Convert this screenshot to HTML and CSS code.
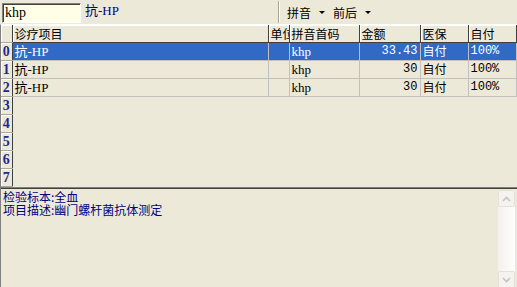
FILE: index.html
```html
<!DOCTYPE html>
<html lang="zh-CN">
<head>
    <meta charset="UTF-8">
    <title>诊疗项目</title>
    <link rel="stylesheet" href="styles.css">
</head>
<body>

<div class="toolbar">
    <input class="search" type="text" value="khp">
    <span class="picked">抗-HP</span>
    <div class="options">
        <span class="opt">拼音 <i class="caret"></i></span>
        <span class="opt">前后 <i class="caret"></i></span>
    </div>
</div>

<div class="grid">
    <table>
        <colgroup>
            <col class="c-ind">
            <col class="c-name">
            <col class="c-unit">
            <col class="c-code">
            <col class="c-price">
            <col class="c-ins">
            <col class="c-self">
        </colgroup>
        <thead>
        <tr>
            <th class="ind"></th>
            <th>诊疗项目</th>
            <th>单位</th>
            <th>拼音首码</th>
            <th>金额</th>
            <th>医保</th>
            <th>自付</th>
        </tr>
        </thead>
        <tbody>
        <tr class="selected">
            <td class="ind">0</td>
            <td class="latin">抗-HP</td>
            <td></td>
            <td class="latin">khp</td>
            <td class="num">33.43</td>
            <td class="cjk">自付</td>
            <td class="mono">100%</td>
        </tr>
        <tr>
            <td class="ind">1</td>
            <td class="latin">抗-HP</td>
            <td></td>
            <td class="latin">khp</td>
            <td class="num">30</td>
            <td class="cjk">自付</td>
            <td class="mono">100%</td>
        </tr>
        <tr>
            <td class="ind">2</td>
            <td class="latin">抗-HP</td>
            <td></td>
            <td class="latin">khp</td>
            <td class="num">30</td>
            <td class="cjk">自付</td>
            <td class="mono">100%</td>
        </tr>
        <tr class="empty"><td class="ind">3</td><td colspan="6"></td></tr>
        <tr class="empty"><td class="ind">4</td><td colspan="6"></td></tr>
        <tr class="empty"><td class="ind">5</td><td colspan="6"></td></tr>
        <tr class="empty"><td class="ind">6</td><td colspan="6"></td></tr>
        <tr class="empty"><td class="ind">7</td><td colspan="6"></td></tr>
        </tbody>
    </table>
</div>

<div class="memo">
    <div class="memo-text">
        <div>检验标本:全血</div>
        <div>项目描述:幽门螺杆菌抗体测定</div>
    </div>
    <div class="scrollbar">
        <div class="sb-btn"><svg width="9" height="6" viewBox="0 0 9 6"><path d="M1 5 L4.5 1.5 L8 5" fill="none" stroke="#c3c3bd" stroke-width="1.6"/></svg></div>
        <div class="sb-track"></div>
        <div class="sb-btn"><svg width="9" height="6" viewBox="0 0 9 6"><path d="M1 1 L4.5 4.5 L8 1" fill="none" stroke="#c3c3bd" stroke-width="1.6"/></svg></div>
    </div>
</div>

</body>
</html>
```

FILE: styles.css
```css
body {
    margin: 0;
    width: 517px;
    height: 287px;
    overflow: hidden;
    background-color: #ece9d8;
    font-family: "Noto Sans CJK SC", sans-serif;
    font-size: 12px;
    color: #000;
}

.toolbar {
    display: flex;
    align-items: center;
    height: 24px;
}

.search {
    box-sizing: border-box;
    width: 79px;
    height: 20px;
    margin: 1px 0 0 2px;
    padding: 0 2px;
    border: 1px solid #fff;
    border-top-color: #808080;
    border-left-color: #808080;
    box-shadow: inset 1px 1px 0 #404040;
    background-color: #ffffe8;
    font-family: "Liberation Serif", serif;
    font-size: 14px;
    outline: none;
}

.picked {
    margin-left: 4px;
    width: 194px;
    color: #000080;
    font-family: "Liberation Serif", "Noto Sans CJK SC", serif;
    font-size: 13px;
    line-height: 16px;
    align-self: flex-start;
    margin-top: 3px;
}

.options {
    display: flex;
    align-items: center;
    gap: 8px;
    flex: 1;
    height: 22px;
    padding-left: 7px;
    border-left: 1px solid #fff;
    box-shadow: -1px 0 0 #aca899;
    font-size: 12px;
}

.opt {
    display: flex;
    align-items: center;
    gap: 6px;
}

.caret {
    width: 0;
    height: 0;
    border-left: 3px solid transparent;
    border-right: 3px solid transparent;
    border-top: 3px solid #000;
    margin-left: 2px;
}

.grid {
    height: 162px;
    border-left: 1px solid #808080;
    border-top: 1px solid #fff;
    overflow: hidden;
}

table {
    border-collapse: collapse;
    table-layout: fixed;
    width: 515px;
}

.c-ind { width: 11px; }
.c-name { width: 256px; }
.c-unit { width: 21px; }
.c-code { width: 70px; }
.c-price { width: 61px; }
.c-ins { width: 48px; }
.c-self { width: 48px; }

th,
td {
    height: 17px;
    padding: 0 2px;
    line-height: 17px;
    font-size: 12px;
    white-space: nowrap;
    overflow: hidden;
    vertical-align: middle;
}

th {
    text-align: left;
    font-weight: normal;
    border-right: 1px solid #404040;
    border-bottom: 1px solid #404040;
    box-shadow: inset 1px 1px 0 #fff;
}

td {
    border-right: 1px solid #c0c0c0;
    border-bottom: 1px solid #c0c0c0;
}

td.cjk {
    line-height: 15px;
    padding-bottom: 2px;
    height: 15px;
}

.latin {
    font-family: "Liberation Serif", "Noto Sans CJK SC", serif;
    font-size: 13px;
}

.num,
.mono {
    font-family: "Liberation Mono", monospace;
}

.num {
    text-align: right;
}

.ind {
    padding: 0;
    text-align: center;
    color: #1e2a8c;
    font-family: "Liberation Serif", serif;
    font-weight: bold;
    font-size: 14px;
    background-color: #ece9d8;
    border-right: 1px solid #404040;
    border-bottom: 1px solid #aca899;
    box-shadow: inset 1px 1px 0 #fff;
}

.selected td {
    background-color: #316ac5;
    color: #fff;
}

.selected td.ind {
    background-color: #ece9d8;
    color: #1e2a8c;
}

.empty td {
    border-right: none;
    border-bottom: none;
}

.empty td.ind {
    border-right: 1px solid #404040;
    border-bottom: 1px solid #aca899;
}

.memo {
    display: flex;
    height: 100px;
    border-top: 1px solid #808080;
    box-shadow: inset 0 1px 0 #404040;
    border-left: 1px solid #808080;
}

.memo-text {
    flex: 1;
    padding: 2px 0 0 2px;
    color: #000080;
    font-size: 12px;
    line-height: 13px;
}

.scrollbar {
    display: flex;
    flex-direction: column;
    width: 17px;
    margin: 2px 2px 0 0;
    background: linear-gradient(to right, #f3f1ea, #fefefe);
}

.sb-btn {
    display: flex;
    align-items: center;
    justify-content: center;
    height: 15px;
    border: 1px solid #e4e2d8;
    background-color: #f4f3ee;
    border-radius: 2px;
}

.sb-track {
    flex: 1;
}
```
